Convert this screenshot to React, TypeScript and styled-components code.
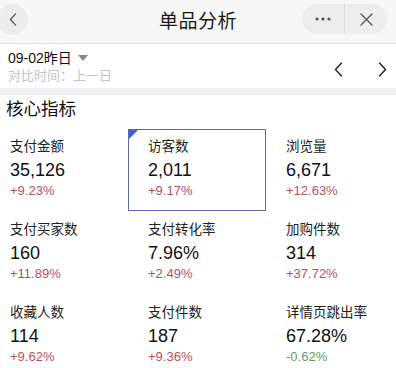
import React from "react";
import styled, { createGlobalStyle } from "styled-components";

const GlobalStyle = createGlobalStyle`
    html, body {
        margin: 0;
        padding: 0;
        background: #ffffff;
        overflow: hidden;
    }
    body {
        font-family: "Liberation Sans", "Noto Sans CJK SC", sans-serif;
        color: #111;
    }
`;

const Page = styled.div`
    width: 396px;
    height: 368px;
    overflow: hidden;
    background: #fff;
`;

const NavBar = styled.header`
    height: 43px;
    background: #f7f7f7;
    border-bottom: 1px solid #e2e2e2;
    display: grid;
    grid-template-columns: 1fr auto 1fr;
    align-items: center;
`;

const BackButton = styled.div`
    width: 31px;
    height: 31px;
    margin-left: -3px;
    margin-top: -5px;
    border-radius: 50%;
    background: #ececec;
    display: flex;
    align-items: center;
    justify-content: center;
`;

const Title = styled.h1`
    margin: -4px 0 0;
    font-size: 19px;
    font-weight: normal;
    color: #1a1a1a;
    letter-spacing: 0.5px;
`;

const Capsule = styled.div`
    justify-self: end;
    margin-right: 9px;
    margin-top: -5px;
    width: 85px;
    height: 30px;
    border-radius: 15px;
    background: #ededed;
    display: flex;
    align-items: center;
`;

const CapsuleHalf = styled.div<{ $divider?: boolean }>`
    flex: 1;
    height: 100%;
    display: flex;
    align-items: center;
    justify-content: center;
    border-right: ${(p) => (p.$divider ? "1px solid #dcdcdc" : "none")};
`;

const DateBar = styled.div`
    height: 44px;
    padding: 5px 8px 0 8px;
    box-sizing: border-box;
    display: flex;
    justify-content: space-between;
`;

const DateInfo = styled.div`
    display: flex;
    flex-direction: column;
`;

const DateMain = styled.div`
    font-size: 14px;
    line-height: 18px;
    color: #111;
    display: flex;
    align-items: center;
    gap: 6px;
`;

const DateCompare = styled.div`
    font-size: 13px;
    line-height: 18px;
    color: #c4c4c4;
`;

const DateArrows = styled.div`
    display: flex;
    align-items: center;
    gap: 35px;
    padding-right: 1px;
    padding-top: 2px;
`;

const Band = styled.div`
    height: 7px;
    background: #f1f1f5;
`;

const SectionTitle = styled.h2`
    margin: 2px 0 0 6px;
    font-size: 17.5px;
    line-height: 24px;
    font-weight: normal;
    color: #111;
`;

const Grid = styled.div`
    margin: 8px 0 0 -10px;
    display: grid;
    grid-template-columns: repeat(3, 138px);
    grid-auto-rows: 83px;
`;

const Card = styled.div<{ $active?: boolean }>`
    position: relative;
    box-sizing: border-box;
    padding: 8px 0 0 19px;
    border: 1px solid ${(p) => (p.$active ? "#6068a8" : "transparent")};
    height: ${(p) => (p.$active ? "82px" : "83px")};
`;

const Corner = styled.div`
    position: absolute;
    top: 0;
    left: 0;
    width: 0;
    height: 0;
    border-top: 9px solid #3a5fd6;
    border-right: 9px solid transparent;
`;

const Label = styled.div`
    font-size: 13.5px;
    line-height: 18px;
    color: #222;
`;

const Value = styled.div`
    margin-top: 2px;
    font-size: 18px;
    line-height: 24px;
    color: #111;
`;

const Change = styled.div<{ $down?: boolean }>`
    font-size: 13px;
    line-height: 18px;
    color: ${(p) => (p.$down ? "#5c9e5c" : "#b3525d")};
`;

const metrics = [
    { label: "支付金额", value: "35,126", change: "+9.23%" },
    { label: "访客数", value: "2,011", change: "+9.17%", active: true },
    { label: "浏览量", value: "6,671", change: "+12.63%" },
    { label: "支付买家数", value: "160", change: "+11.89%" },
    { label: "支付转化率", value: "7.96%", change: "+2.49%" },
    { label: "加购件数", value: "314", change: "+37.72%" },
    { label: "收藏人数", value: "114", change: "+9.62%" },
    { label: "支付件数", value: "187", change: "+9.36%" },
    { label: "详情页跳出率", value: "67.28%", change: "-0.62%" },
];

const Chevron = ({ dir, color = "#222", w = 9, h = 15 }: { dir: "left" | "right"; color?: string; w?: number; h?: number }) => (
    <svg width={w} height={h} viewBox="0 0 9 15">
        <path
            d={dir === "left" ? "M7.5 1 L1.5 7.5 L7.5 14" : "M1.5 1 L7.5 7.5 L1.5 14"}
            fill="none"
            stroke={color}
            strokeWidth="1.4"
            strokeLinecap="round"
            strokeLinejoin="round"
        />
    </svg>
);

export default function App() {
    return (
        <Page>
            <GlobalStyle />
            <NavBar>
                <div>
                    <BackButton>
                        <Chevron dir="left" color="#555" w={8} h={13} />
                    </BackButton>
                </div>
                <Title>单品分析</Title>
                <Capsule>
                    <CapsuleHalf $divider>
                        <svg width="16" height="4" viewBox="0 0 16 4">
                            <circle cx="2" cy="2" r="1.6" fill="#555" />
                            <circle cx="8" cy="2" r="1.6" fill="#555" />
                            <circle cx="14" cy="2" r="1.6" fill="#555" />
                        </svg>
                    </CapsuleHalf>
                    <CapsuleHalf>
                        <svg width="13" height="13" viewBox="0 0 13 13">
                            <path d="M1 1 L12 12 M12 1 L1 12" stroke="#555" strokeWidth="1.3" strokeLinecap="round" />
                        </svg>
                    </CapsuleHalf>
                </Capsule>
            </NavBar>

            <DateBar>
                <DateInfo>
                    <DateMain>
                        09-02昨日
                        <svg width="10" height="6" viewBox="0 0 10 6">
                            <path d="M0 0 L10 0 L5 6 Z" fill="#888" />
                        </svg>
                    </DateMain>
                    <DateCompare>对比时间：上一日</DateCompare>
                </DateInfo>
                <DateArrows>
                    <Chevron dir="left" />
                    <Chevron dir="right" />
                </DateArrows>
            </DateBar>
            <Band />

            <SectionTitle>核心指标</SectionTitle>
            <Grid>
                {metrics.map((m) => (
                    <Card key={m.label} $active={m.active}>
                        {m.active ? <Corner /> : null}
                        <Label>{m.label}</Label>
                        <Value>{m.value}</Value>
                        <Change $down={m.change.startsWith("-")}>{m.change}</Change>
                    </Card>
                ))}
            </Grid>
        </Page>
    );
}
